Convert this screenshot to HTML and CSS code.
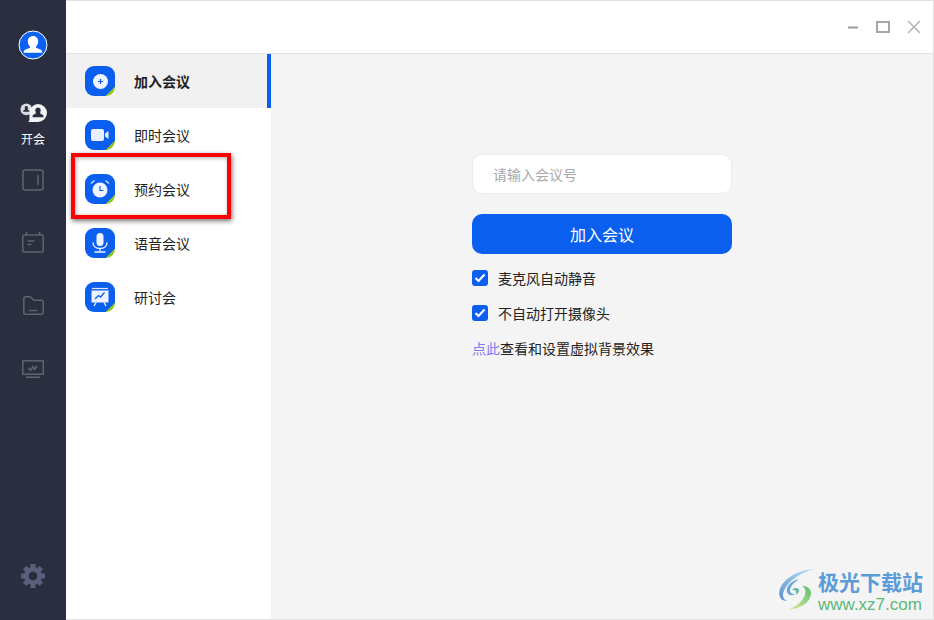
FILE: index.html
```html
<!DOCTYPE html>
<html lang="en">
<head>
    <meta charset="UTF-8">
    <title>开会</title>
    <link rel="stylesheet" href="styles.css">
</head>
<body>
<div class="app">
    <div class="sidebar">
        <svg class="avatar" width="30" height="30" viewBox="0 0 30 30">
            <circle cx="15" cy="15" r="14" fill="#0b62f0" stroke="#fff" stroke-width="1"/>
            <path d="M15 6c-3.200 0-5.200 2.300-5.200 5.400 0 2.200 1 3.900 2.200 5v1.400c-1.900.8-5.500 1.700-6.200 3.600-.2.600 0 1.300.8 1.300h16.800c.8 0 1-.7.800-1.300-.7-1.900-4.300-2.800-6.200-3.600v-1.400c1.200-1.100 2.200-2.800 2.200-5C20.200 8.300 18.200 6 15 6z" fill="#fff"/>
        </svg>
        <div class="nav-active">
            <svg width="27" height="20" viewBox="0 0 30 22">
                <circle cx="7" cy="7" r="6.500" fill="#d9dbe2"/>
                <path d="M7 3.300a1.900 1.900 0 0 1 1.500 3v.9l2 1.300v1H3.500v-1l2-1.300v-.9a1.900 1.900 0 0 1 1.500-3z" fill="#2a2e3f"/>
                <path d="M20 1a10 10 0 0 1 0 20H9.500v-.8c.8-.4 1-1 1-1.900V11A10 10 0 0 1 20 1z" fill="#f2f3f5"/>
                <path d="M20 5a3.100 3.100 0 0 1 2.500 4.900v1.700l3.500 2v2.200H14v-2.200l3.500-2V9.900A3.100 3.100 0 0 1 20 5z" fill="#2a2e3f"/>
            </svg>
            <span>开会</span>
        </div>
        <div class="nav-item">
            <svg width="22" height="22" viewBox="0 0 22 22" fill="none" stroke="#5f6372" stroke-width="1.500">
                <rect x="1" y="1" width="20" height="20" rx="2.500"/>
                <path d="M16 6v10"/>
            </svg>
        </div>
        <div class="nav-item">
            <svg width="22" height="21" viewBox="0 0 22 21" fill="none" stroke="#5f6372" stroke-width="1.500">
                <rect x=".8" y="3" width="20.400" height="17" rx="1.500"/>
                <path d="M4.500 0v3M17.500 0v3M5.500 9h7M5.500 12.500h4"/>
            </svg>
        </div>
        <div class="nav-item">
            <svg width="21" height="19" viewBox="0 0 21 19" fill="none" stroke="#5f6372" stroke-width="1.500">
                <path d="M.8 2.800a2 2 0 0 1 2-2h4.500L11 4.300h7.200a2 2 0 0 1 2 2v9.900a2 2 0 0 1-2 2H2.800a2 2 0 0 1-2-2z"/>
                <path d="M6 14.500h8.500"/>
            </svg>
        </div>
        <div class="nav-item">
            <svg width="22" height="18" viewBox="0 0 22 18" fill="none" stroke="#5f6372" stroke-width="1.500">
                <rect x=".8" y=".8" width="20.400" height="13.400"/>
                <path d="M4 17.200h14M6.500 8l2 2.500L11 6.500l1.500 3L15 6"/>
            </svg>
        </div>
        <svg class="gear" width="24" height="24" viewBox="0 0 24 24">
            <path fill="#59607a" fill-rule="evenodd" d="M9.500 0h5v3.200l1.800.8 2.300-2.300 3.500 3.500-2.300 2.300.8 1.900H24v5h-3.400l-.8 1.800 2.300 2.300-3.500 3.500-2.300-2.300-1.800.8V24h-5v-3.500l-1.800-.8-2.400 2.300-3.500-3.500 2.300-2.300-.7-1.800H0V9.400h3.400l.7-1.900-2.300-2.300 3.500-3.500L7.700 4l1.800-.8zM12 7.600a4.400 4.400 0 1 0 0 8.800 4.400 4.400 0 0 0 0-8.800z"/>
        </svg>
    </div>
    <div class="content">
        <div class="titlebar">
            <svg width="12" height="12" viewBox="0 0 12 12"><path d="M1 6.500h10" stroke="#9b9b9b" stroke-width="2"/></svg>
            <svg width="14" height="12" viewBox="0 0 14 12"><rect x="1" y="1" width="12" height="10" fill="none" stroke="#a6a6a6" stroke-width="2"/></svg>
            <svg width="14" height="14" viewBox="0 0 14 14"><path d="M1 1l12 12M13 1L1 13" stroke="#b4b4b4" stroke-width="1.500"/></svg>
        </div>
        <div class="panels">
            <div class="menu">
                <div class="menu-row selected">
                    <div class="tile">
                        <svg width="15" height="15" viewBox="0 0 15 15">
                            <circle cx="7.500" cy="7.500" r="7.500" fill="#f0f4ff"/>
                            <path d="M7.500 5v5M5 7.500h5" stroke="#0b5fee" stroke-width="1.200"/>
                        </svg>
                    </div>
                    <span>加入会议</span>
                </div>
                <div class="menu-row">
                    <div class="tile">
                        <svg width="18" height="12" viewBox="0 0 18 12">
                            <rect width="13" height="12" rx="2" fill="#e9efff"/>
                            <path d="M14 4.500l3.500-2.500v8L14 7.500z" fill="#e9efff"/>
                        </svg>
                    </div>
                    <span>即时会议</span>
                </div>
                <div class="menu-row">
                    <div class="tile">
                        <svg width="20" height="20" viewBox="0 0 20 20">
                            <path d="M1 4.500l3.500-3M19 4.500l-3.500-3" stroke="#dce6ff" stroke-width="1.200" fill="none"/>
                            <circle cx="10" cy="11" r="7.500" fill="#eef3ff"/>
                            <path d="M10 7v4.500h3.500" stroke="#0b5fee" stroke-width="1.200" fill="none"/>
                        </svg>
                    </div>
                    <span>预约会议</span>
                </div>
                <div class="menu-row">
                    <div class="tile">
                        <svg width="16" height="20" viewBox="0 0 16 20">
                            <rect x="4.500" y="0" width="7" height="13" rx="3.500" fill="#eef3ff"/>
                            <path d="M1 9.500c0 3.800 3 6 7 6s7-2.200 7-6M8 15.500V18M2.500 19h11" stroke="#eef3ff" stroke-width="1.400" fill="none"/>
                        </svg>
                    </div>
                    <span>语音会议</span>
                </div>
                <div class="menu-row">
                    <div class="tile">
                        <svg width="20" height="20" viewBox="0 0 20 20">
                            <path d="M2 1.500h16" stroke="#dce6ff" stroke-width="1.200"/>
                            <rect x="1.500" y="3.500" width="17" height="12" fill="#eef3ff"/>
                            <path d="M5 12l3.500-3.500 2 1.500 4-4.500" stroke="#0b5fee" stroke-width="1.300" fill="none"/>
                            <path d="M6 15.500l-2 3.500M14 15.500l2 3.500" stroke="#eef3ff" stroke-width="1.300"/>
                        </svg>
                    </div>
                    <span>研讨会</span>
                </div>
            </div>
            <div class="main">
                <div class="join-form">
                    <div class="number-input">请输入会议号</div>
                    <div class="join-btn">加入会议</div>
                    <div class="check-row"><span class="check"><svg width="12" height="10" viewBox="0 0 12 10"><path d="M1.500 5l3 3 6-6.500" stroke="#fff" stroke-width="2" fill="none"/></svg></span>麦克风自动静音</div>
                    <div class="check-row"><span class="check"><svg width="12" height="10" viewBox="0 0 12 10"><path d="M1.500 5l3 3 6-6.500" stroke="#fff" stroke-width="2" fill="none"/></svg></span>不自动打开摄像头</div>
                    <div class="bg-link"><a>点此</a>查看和设置虚拟背景效果</div>
                </div>
            </div>
        </div>
    </div>
</div>

<div class="highlight"></div>

<div class="watermark">
    <svg width="43" height="42" viewBox="0 0 46 52">
        <defs>
            <linearGradient id="swirlTop" x1="0" y1="1" x2="1" y2="0">
                <stop offset="0" stop-color="#5b8fd0"/>
                <stop offset="1" stop-color="#c4e6f5"/>
            </linearGradient>
            <linearGradient id="swirlBottom" x1="1" y1="0" x2="0" y2="1">
                <stop offset="0" stop-color="#57c06e"/>
                <stop offset="1" stop-color="#e4e8a0"/>
            </linearGradient>
        </defs>
        <path d="M46 1C26 2 6 13 2 28c-2 8 3 13 9 13-5-3-6-8-3-14C13 16 28 6 46 1z" fill="url(#swirlTop)"/>
        <path d="M26 14c-8 1-16 8-15 15 1 5 7 6 11 3-4 1-7-1-7-4 0-5 5-10 11-14z" fill="#6aa5dc"/>
        <path d="M13 51c14 0 26-8 28-18 1-6-4-11-11-11 4 3 5 7 3 12-3 8-11 14-20 17z" fill="url(#swirlBottom)"/>
        <path d="M17 27c3-3 8-3 9 0 1 2-1 5-4 6 1-2 1-4-1-5-1-1-3-1-4-1z" fill="#68b8a8"/>
    </svg>
    <div class="wm-text">
        <div class="wm-name">极光下载站</div>
        <div class="wm-url">www.xz7.com</div>
    </div>
</div>
</body>
</html>
```
FILE: styles.css
```css
* {
    box-sizing: border-box;
}
body {
    margin: 0;
    font-family: "Noto Sans CJK SC", "Liberation Sans", sans-serif;
    color: #222;
    width: 934px;
    height: 620px;
    overflow: hidden;
    position: relative;
}
.app {
    display: flex;
    height: 620px;
}
.sidebar {
    width: 66px;
    background-color: #2a2e3f;
    display: flex;
    flex-direction: column;
    align-items: center;
    padding-top: 30px;
}
.avatar {
    display: block;
}
.nav-active {
    margin-top: 43px;
    display: flex;
    flex-direction: column;
    align-items: center;
    color: #fff;
    font-size: 12px;
    line-height: 19px;
}
.nav-active span {
    margin-top: 6px;
}
.nav-item {
    height: 63px;
    width: 66px;
    display: flex;
    align-items: center;
    justify-content: center;
}
.gear {
    margin-top: auto;
    margin-bottom: 32px;
}
.content {
    flex: 1;
    display: flex;
    flex-direction: column;
    border-top: 1px solid #e2e2e2;
    border-right: 1px solid #e2e2e2;
    border-bottom: 1px solid #e2e2e2;
}
.titlebar {
    height: 53px;
    background-color: #fff;
    border-bottom: 1px solid #e2e2e2;
    display: flex;
    align-items: center;
    justify-content: flex-end;
    gap: 17px;
    padding-right: 12px;
}
.panels {
    flex: 1;
    display: flex;
}
.menu {
    width: 205px;
    background-color: #fff;
}
.menu-row {
    height: 54px;
    display: flex;
    align-items: center;
    padding-left: 19px;
    font-size: 14px;
}
.menu-row.selected {
    background-color: #f1f1f1;
    border-right: 4px solid #0b5fee;
    font-weight: bold;
}
.menu-row span {
    margin-left: 19px;
}
.tile {
    width: 30px;
    height: 30px;
    border-radius: 9px;
    background: linear-gradient(135deg, #0b5fee 84%, #8fc31f 84%);
    display: flex;
    align-items: center;
    justify-content: center;
}
.main {
    flex: 1;
    background-color: #f4f4f4;
    padding: 100px 0 0 201px;
}
.join-form {
    width: 260px;
}
.number-input {
    height: 40px;
    background-color: #fff;
    border: 1px solid #ececec;
    border-radius: 10px;
    padding-left: 20px;
    font-size: 14px;
    line-height: 38px;
    color: #a8a8a8;
}
.join-btn {
    margin-top: 20px;
    height: 40px;
    background-color: #0b5fee;
    border-radius: 10px;
    color: #fff;
    font-size: 16px;
    line-height: 40px;
    text-align: center;
}
.check-row {
    display: flex;
    align-items: center;
    font-size: 14px;
    height: 20px;
    margin-top: 15px;
}
.join-btn + .check-row {
    margin-top: 14px;
}
.check {
    width: 16px;
    height: 16px;
    background-color: #0b5fee;
    border-radius: 3px;
    margin-right: 10px;
    display: flex;
    align-items: center;
    justify-content: center;
}
.bg-link {
    margin-top: 15px;
    font-size: 14px;
    line-height: 20px;
}
.bg-link a {
    color: #7d7df0;
}
.highlight {
    position: absolute;
    left: 71px;
    top: 153px;
    width: 160px;
    height: 66px;
    border: 4px solid #f00;
    box-shadow: 1px 2px 5px rgba(0, 0, 0, 0.55), inset 1px 1px 4px rgba(0, 0, 0, 0.35);
}
.watermark {
    position: absolute;
    left: 775px;
    top: 568px;
    display: flex;
}
.wm-text {
    display: flex;
    flex-direction: column;
}
.wm-name {
    font-size: 21px;
    line-height: 27px;
    font-weight: bold;
    color: #5a9bd8;
}
.wm-url {
    font-family: "Liberation Sans", sans-serif;
    font-size: 17px;
    line-height: 20px;
    color: #5cb878;
}
```
